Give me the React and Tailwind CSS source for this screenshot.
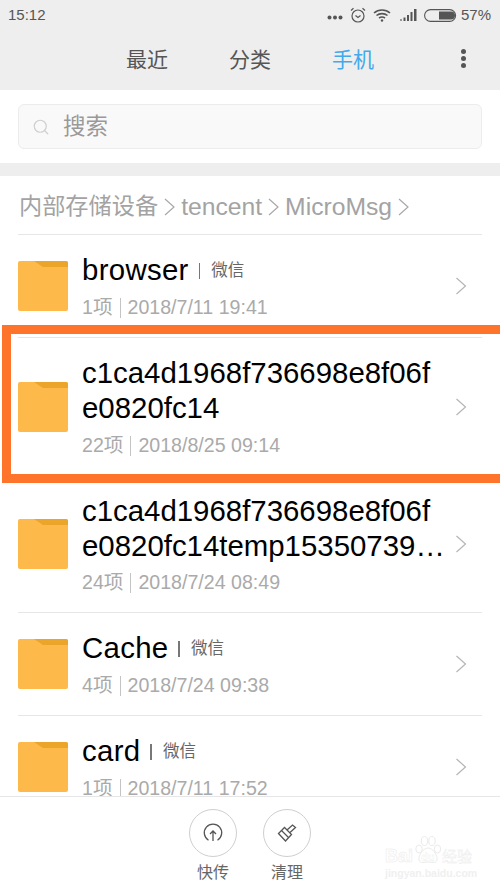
import { Search } from 'lucide-react';

const sans = 'font-["Liberation_Sans","Noto_Sans_CJK_SC",sans-serif]';

const rows = [
    { lines: ['browser'], tag: '微信', meta: '1项', date: '2018/7/11 19:41', h: 'h-[102px]' },
    { lines: ['c1ca4d1968f736698e8f06f', 'e0820fc14'], meta: '22项', date: '2018/8/25 09:14', h: 'h-[137px]' },
    { lines: ['c1ca4d1968f736698e8f06f', 'e0820fc14temp15350739…'], meta: '24项', date: '2018/7/24 08:49', h: 'h-[136px]' },
    { lines: ['Cache'], tag: '微信', meta: '4项', date: '2018/7/24 09:38', h: 'h-[102px]' },
    { lines: ['card'], tag: '微信', meta: '1项', date: '2018/7/11 17:52', h: 'h-[102px]' },
];

function Folder() {
    return (
        <svg width="50" height="50" viewBox="0 0 50 50" className="shrink-0">
            <path d="M2 0H48a2 2 0 0 1 2 2V48a2 2 0 0 1-2 2H2a2 2 0 0 1-2-2V2a2 2 0 0 1 2-2Z" fill="#fdb94a" />
            <path d="M16 0H48a2 2 0 0 1 2 2V6H25Z" fill="#eba52b" />
        </svg>
    );
}

function Chevron() {
    return (
        <svg width="12" height="18" viewBox="0 0 12 18" fill="none" stroke="#b5b5b5" strokeWidth="1.2" className="shrink-0">
            <path d="M1.5 1L10.5 9L1.5 17" />
        </svg>
    );
}

function Crumb() {
    return (
        <svg width="11" height="20" viewBox="0 0 11 20" fill="none" stroke="#a8a8a8" strokeWidth="1.2" className="mx-[6px] shrink-0">
            <path d="M1 2L10 10L1 18" />
        </svg>
    );
}

function Row({ row }) {
    return (
        <div className={`${row.h} shrink-0 flex items-center pl-[18px] pr-[33px]`}>
            <Folder />
            <div className="ml-[14px] flex-1 min-w-0">
                {row.lines.map((line, i) => (
                    <div key={i} className="flex items-center h-[35px] text-[29.4px] text-black whitespace-nowrap">
                        <span className={row.tag ? 'tracking-[0.3px]' : ''}>{line}</span>
                        {row.tag && (
                            <>
                                <span className="w-[1.5px] h-[16px] bg-[#777] ml-[10px] mr-[11px]" />
                                <span className="text-[16.5px] text-[#666]">{row.tag}</span>
                            </>
                        )}
                    </div>
                ))}
                <div className="flex items-center h-[23px] mt-[8px] text-[19.6px] text-[#aaaaaa] whitespace-nowrap">
                    <span>{row.meta}</span>
                    <span className="w-px h-[20px] bg-[#c4c4c4] mx-[7px]" />
                    <span>{row.date}</span>
                </div>
            </div>
            <Chevron />
        </div>
    );
}

export default function App() {
    return (
        <div className={`relative w-[500px] h-[889px] overflow-hidden bg-white flex flex-col ${sans}`}>
            {/* status bar + tabs */}
            <div className="h-[90px] shrink-0 bg-[#eeeeee]">
                <div className="h-[30px] flex items-center pl-[8px] pr-[9px] text-[15px] text-[#555]">
                    <span>15:12</span>
                    <div className="ml-auto flex items-center">
                        <svg width="16" height="5" viewBox="0 0 16 5" fill="#555" className="mt-[5px]">
                            <circle cx="2.5" cy="2.5" r="2" /><circle cx="8" cy="2.5" r="2" /><circle cx="13.5" cy="2.5" r="2" />
                        </svg>
                        <svg width="16" height="16" viewBox="0 0 16 16" fill="none" stroke="#555" strokeWidth="1.2" className="ml-[7px]">
                            <circle cx="8" cy="9" r="6" />
                            <path d="M5.5 8.5L8 10.5L10.5 8.5M1 3.5L3.5 1.2M15 3.5L12.5 1.2" />
                        </svg>
                        <svg width="18" height="14" viewBox="0 0 18 14" fill="none" stroke="#555" strokeWidth="1.6" className="ml-[7px]">
                            <path d="M1 5C5.5 1 12.5 1 17 5M3.5 7.5C6.5 5 11.5 5 14.5 7.5M6 10C7.8 8.8 10.2 8.8 12 10" />
                            <circle cx="9" cy="12.5" r="1.2" fill="#555" stroke="none" />
                        </svg>
                        <svg width="18" height="12" viewBox="0 0 18 12" fill="#555" className="ml-[9px]">
                            <rect x="0" y="10" width="2" height="2" fill="#999" />
                            <rect x="3.5" y="8.5" width="2" height="3.5" />
                            <rect x="7" y="6" width="2" height="6" />
                            <rect x="10.5" y="3" width="2" height="9" />
                            <rect x="14" y="0" width="2.5" height="12" />
                        </svg>
                        <svg width="33" height="13" viewBox="0 0 33 13" className="ml-[6px]">
                            <rect x="0.6" y="0.6" width="31" height="11.8" rx="5.9" fill="none" stroke="#555" strokeWidth="1.1" />
                            <path d="M15 2.5H27a4 4 0 0 1 0 8H15Z" fill="#555" />
                        </svg>
                        <span className="ml-[4px]">57%</span>
                    </div>
                </div>
                <div className="relative h-[60px] text-[21px]">
                    <div className="pl-[126px] pt-[14px] flex text-[#555]">
                        <span className="w-[103px]">最近</span>
                        <span className="w-[103px]">分类</span>
                        <span className="text-[#42a9ec]">手机</span>
                    </div>
                    <div className="absolute left-[461px] top-[19px] flex flex-col gap-[2px]">
                        <span className="size-[5px] rounded-full bg-[#555]" />
                        <span className="size-[5px] rounded-full bg-[#555]" />
                        <span className="size-[5px] rounded-full bg-[#555]" />
                    </div>
                </div>
            </div>

            {/* search */}
            <div className="h-[73px] shrink-0 px-[18px] pt-[14px]">
                <div className="h-[45px] w-[464px] rounded-[6px] border border-[#ececec] bg-[#f9f9f9] flex items-center pl-[13px] text-[22.5px] text-[#999]">
                    <Search size={18} strokeWidth={1.6} color="#cfcfcf" />
                    <span className="ml-[13px] pt-[1px]">搜索</span>
                </div>
            </div>
            <div className="h-[13px] shrink-0 bg-[#eeeeee]" />

            {/* breadcrumb */}
            <div className="h-[58px] shrink-0 flex items-center pl-[19px] pt-[3px] text-[24.7px] text-[#a3a3a3] whitespace-nowrap">
                <span className="text-[23.2px]">内部存储设备</span>
                <Crumb />
                <span>tencent</span>
                <Crumb />
                <span>MicroMsg</span>
                <Crumb />
            </div>

            {/* file list */}
            <div className="flex-1 min-h-0 overflow-hidden">
                {rows.map((row) => (
                    <div key={row.date}>
                        <div className="h-px mx-[18px] bg-[#e6e6e6]" />
                        <Row row={row} />
                    </div>
                ))}
            </div>

            {/* bottom actions */}
            <div className="h-[93px] shrink-0 bg-white border-t border-[#e6e6e6] flex justify-center gap-[26px]">
                <div className="w-[48px] pt-[12px] flex flex-col items-center">
                    <div className="size-[48px] rounded-full border border-[#cfcfcf] flex items-center justify-center">
                        <svg width="20" height="20" viewBox="0 0 20 20" fill="none" stroke="#555" strokeWidth="1.3">
                            <path d="M5.5 17.2A8.7 8.7 0 1 1 14.5 17.2" />
                            <path d="M10 18V8.5M7 11L10 8L13 11" />
                        </svg>
                    </div>
                    <span className="mt-[4px] text-[16px] text-[#666] whitespace-nowrap">快传</span>
                </div>
                <div className="w-[48px] pt-[12px] flex flex-col items-center">
                    <div className="size-[48px] rounded-full border border-[#cfcfcf] flex items-center justify-center">
                        <svg width="20" height="20" viewBox="0 0 20 20" fill="none" stroke="#555" strokeWidth="1.3">
                            <path d="M1.5 10.5L8.5 18L14.5 11.5L7.5 4.5Z" />
                            <path d="M4.5 7.5L11.5 14.5" />
                            <path d="M10 7L15.5 2L18.5 4.5L13 9.5" />
                        </svg>
                    </div>
                    <span className="mt-[4px] text-[16px] text-[#666] whitespace-nowrap">清理</span>
                </div>
            </div>

            {/* baidu watermark */}
            <div className="absolute left-[385px] top-[836px] w-[90px] h-[44px] text-white leading-none">
                <span className="absolute left-0 top-[11px] text-[18px] font-bold [-webkit-text-stroke:0.5px_#ebebeb]">Bai</span>
                <svg width="28" height="28" viewBox="0 0 28 28" fill="none" stroke="#ebebeb" strokeWidth="1" className="absolute left-[29px] top-0">
                    <ellipse cx="5" cy="13" rx="3.2" ry="4" />
                    <ellipse cx="10.5" cy="5" rx="3.2" ry="4.5" />
                    <ellipse cx="18" cy="5" rx="3.2" ry="4.5" />
                    <ellipse cx="23.5" cy="13" rx="3.2" ry="4" />
                    <path d="M14 12C9 12 4 20 5 24C6 28 11 26 14 26C17 26 22 28 23 24C24 20 19 12 14 12Z" />
                </svg>
                <span className="absolute left-[36px] top-[16px] text-[11px] font-bold [-webkit-text-stroke:0.3px_#ebebeb]">du</span>
                <span className="absolute left-[57px] top-[13px] text-[15px] [-webkit-text-stroke:0.4px_#ebebeb]">经验</span>
                <span className="absolute left-0 top-[32px] text-[10.5px] font-bold text-[#f0f0f0] whitespace-nowrap">jingyan.baidu.com</span>
            </div>

            {/* highlight frame */}
            <div className="absolute left-[2px] top-[325px] w-[510px] h-[158px] border-[9px] border-[#fe742a]" />
        </div>
    );
}
